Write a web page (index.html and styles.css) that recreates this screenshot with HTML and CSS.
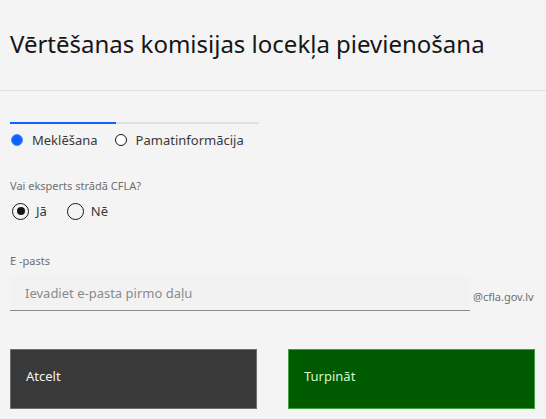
FILE: index.html
```html
<!DOCTYPE html>
<html lang="lv">
<head>
<meta charset="utf-8">
<link rel="stylesheet" href="styles.css">
</head>
<body>
<div class="header">
  <h1 class="title">Vērtēšanas komisijas locekļa pievienošana</h1>
</div>
<div class="content">
  <div class="tabs">
    <div class="tabline"><div class="tabactive"></div></div>
    <div class="radio-row">
      <label class="radio"><span class="dot blue"></span>Meklēšana</label>
      <label class="radio"><span class="dot"></span>Pamatinformācija</label>
    </div>
  </div>
  <div class="field-label q">Vai eksperts strādā CFLA?</div>
  <div class="radio-row big">
    <label class="radio"><span class="dot bigdot checked"></span>Jā</label>
    <label class="radio"><span class="dot bigdot"></span>Nē</label>
  </div>
  <div class="field-label email">E -pasts</div>
  <div class="input-row">
    <div class="input">Ievadiet e-pasta pirmo daļu</div>
    <span class="suffix">@cfla.gov.lv</span>
  </div>
  <div class="buttons">
    <div class="btn secondary">Atcelt</div>
    <div class="btn primary">Turpināt</div>
  </div>
</div>
</body>
</html>
```
FILE: styles.css
```css
html, body {
  margin: 0;
  padding: 0;
  background: #f4f4f4;
  font-family: "Noto Sans", "Open Sans", sans-serif;
  color: #161616;
}
.header {
  height: 91px;
  border-bottom: 1px solid #e0e0e0;
  box-sizing: border-box;
  padding: 26px 0 0 10px;
}
.title {
  margin: 0;
  font-weight: 400;
  font-size: 24px;
  line-height: 36px;
  color: #161616;
}
.content {
  padding: 31px 10px 0 10px;
}
.tabs {
  width: 249px;
}
.tabline {
  height: 2px;
  background: #e0e0e0;
}
.tabactive {
  width: 106px;
  height: 2px;
  background: #0f62fe;
}
.radio-row {
  display: flex;
  align-items: center;
  gap: 16px;
  height: 32px;
  font-size: 13px;
  color: #393939;
}
.radio {
  display: flex;
  align-items: center;
  gap: 9px;
}
.dot {
  width: 12px;
  height: 12px;
  margin-left: 1px;
  border: 1.5px solid #161616;
  border-radius: 50%;
  box-sizing: border-box;
  background: #fff;
}
.dot.blue {
  background: #0f62fe;
  border-color: #4d8cff;
}
.field-label {
  font-size: 11px;
  color: #6f6f6f;
}
.q {
  margin-top: 22px;
}
.big {
  margin-top: 2px;
  gap: 18px;
}
.bigdot {
  width: 17px;
  height: 17px;
  border: 1px solid #161616;
  background: transparent;
  margin-left: 2px;
  position: relative;
}
.big .radio {
  gap: 7px;
}
.bigdot.checked::after {
  content: "";
  position: absolute;
  left: 3.5px;
  top: 3.5px;
  width: 8px;
  height: 8px;
  border-radius: 50%;
  background: #161616;
}
.email {
  margin-top: 26px;
}
.input-row {
  display: flex;
  align-items: center;
  margin-top: 7px;
}
.input {
  width: 460px;
  height: 36px;
  box-sizing: border-box;
  padding-left: 15px;
  display: flex;
  align-items: center;
  background: #f2f2f2;
  border-bottom: 1px solid #8d8d8d;
  font-size: 13px;
  color: #8a8a8a;
}
.suffix {
  margin-left: 3px;
  margin-top: 6px;
  font-size: 11px;
  color: #6f6f6f;
}
.buttons {
  display: flex;
  gap: 31px;
  margin-top: 38px;
}
.btn {
  width: 247px;
  height: 60px;
  box-sizing: border-box;
  padding: 17px 15px 0 15px;
  font-size: 13px;
  color: #f4f4f4;
}
.secondary {
  background: #393939;
  border: 1px solid #6f6f6f;
}
.primary {
  background: #005a00;
  border: 1px solid #3fa03f;
  color: #d8f5c8;
}
```
